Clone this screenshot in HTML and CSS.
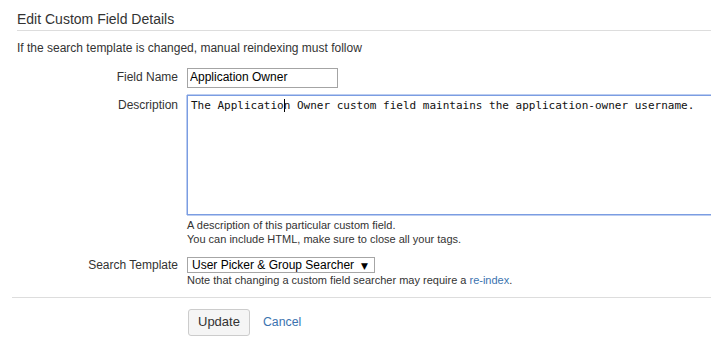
FILE: index.html
```html
<!DOCTYPE html>
<html lang="en">
<head>
    <meta charset="UTF-8">
    <meta name="viewport" content="width=device-width, initial-scale=1.0">
    <title>Edit Custom Field Details</title>
    <link rel="stylesheet" href="styles.css">
</head>
<body>
    <div class="page">
        <h2 class="page-title">Edit Custom Field Details</h2>
        <p class="intro">If the search template is changed, manual reindexing must follow</p>

        <form class="field-form">
            <div class="field-row">
                <label class="field-label" for="fieldName">Field Name</label>
                <div class="field-body">
                    <input id="fieldName" class="text-input" type="text" value="Application Owner">
                </div>
            </div>

            <div class="field-row">
                <label class="field-label">Description</label>
                <div class="field-body field-body-wide">
                    <div class="textarea" role="textbox">The Applicatio<span class="caret"></span>n Owner custom field maintains the application-owner username.</div>
                    <div class="help">A description of this particular custom field.<br>You can include HTML, make sure to close all your tags.</div>
                </div>
            </div>

            <div class="field-row field-row-select">
                <label class="field-label">Search Template</label>
                <div class="field-body">
                    <div class="select"><span>User Picker &amp; Group Searcher</span><span class="select-arrow">▼</span></div>
                    <div class="help">Note that changing a custom field searcher may require a <a href="#">re-index</a>.</div>
                </div>
            </div>

            <div class="form-footer">
                <button type="button" class="button">Update</button>
                <a href="#" class="cancel">Cancel</a>
            </div>
        </form>
    </div>
</body>
</html>
```

FILE: styles.css
```css
body {
    margin: 0;
    font-family: "Liberation Sans", Arial, sans-serif;
    font-size: 12px;
    color: #333;
    overflow: hidden;
}
a {
    color: #3b73af;
    text-decoration: none;
}
.page {
    padding-left: 12px;
}
.page-title {
    margin: 0 0 0 5px;
    padding: 9px 0 1px;
    font-size: 14px;
    font-weight: normal;
    line-height: 20px;
    border-bottom: 1px solid #ddd;
}
.intro {
    margin: 9px 0 0 5px;
    line-height: 16px;
}
.field-row {
    display: flex;
    align-items: baseline;
    margin-top: 7px;
}
.field-row:first-child {
    margin-top: 12px;
}
.field-row-select {
    margin-top: 11px;
}
.field-label {
    width: 166px;
    flex-shrink: 0;
    text-align: right;
    line-height: 16px;
}
.field-body {
    margin-left: 9px;
}
.field-body-wide {
    flex: 1;
    min-width: 0;
}
.text-input {
    box-sizing: border-box;
    width: 151px;
    height: 20px;
    margin: 0;
    padding: 0 2px 2px;
    border: 1px solid #a4a4a4;
    font-family: "Liberation Sans", Arial, sans-serif;
    font-size: 12px;
    line-height: 16px;
    color: #000;
}
/* runs past the right edge in the original, so no right border */
.textarea {
    box-sizing: border-box;
    width: 100%;
    height: 120px;
    padding: 3px 0 3px 3px;
    border: 1px solid #7b9de2;
    border-right: none;
    box-shadow: -1px 0 0 0 #bccdf0, 0 -1px 0 0 #bccdf0, 0 1px 0 0 #bccdf0;
    font-family: "DejaVu Sans Mono", monospace;
    font-size: 11px;
    line-height: 14px;
    color: #111;
    white-space: pre;
    overflow: hidden;
}
.caret {
    display: inline-block;
    width: 1px;
    height: 13px;
    margin-right: -1px;
    vertical-align: -3px;
    background: #000;
}
.help {
    margin-top: 3px;
    font-size: 11px;
    line-height: 14px;
}
.field-row-select .help {
    margin-top: 0;
}
.select {
    display: inline-flex;
    align-items: baseline;
    box-sizing: border-box;
    height: 16px;
    padding: 0 6px 0 4px;
    border: 1px solid #a6a6a6;
    line-height: 14px;
    color: #000;
}
.select-arrow {
    margin-left: 7px;
    font-family: "DejaVu Sans", sans-serif;
    font-size: 9px;
}
.form-footer {
    display: flex;
    align-items: baseline;
    margin-top: 10px;
    padding: 11px 0 0 176px;
    border-top: 1px solid #ddd;
}
.button {
    padding: 4px 9px 6px;
    border: 1px solid #ccc;
    border-radius: 3px;
    background-color: #f5f5f5;
    font-family: "Liberation Sans", Arial, sans-serif;
    font-size: 13px;
    line-height: 15px;
    color: #333;
}
.cancel {
    margin-left: 13px;
    font-size: 12.3px;
}
```
